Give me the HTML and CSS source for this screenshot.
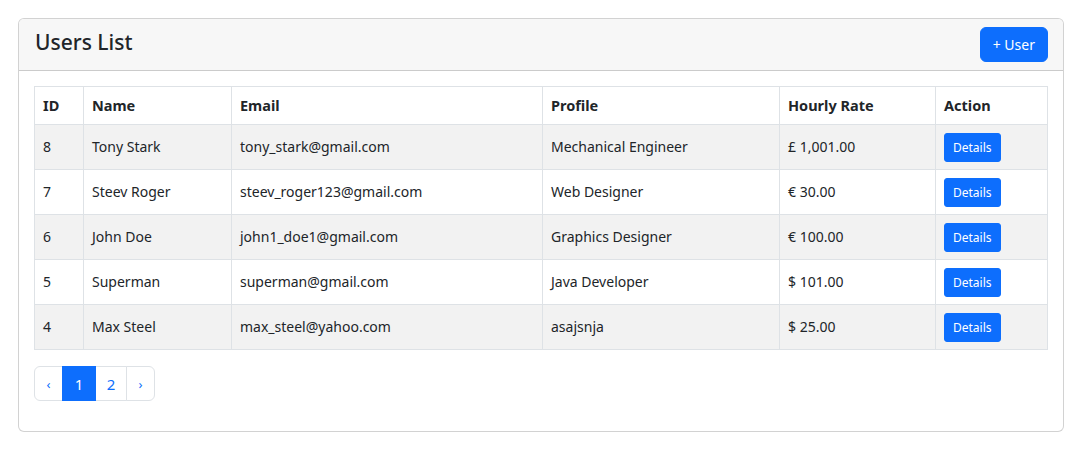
FILE: index.html
```html
<!DOCTYPE html>
<html lang="en">
<head>
<meta charset="utf-8">
<title>Users List</title>
<link rel="stylesheet" href="styles.css">
</head>
<body>
<div class="page">
  <div class="card">
    <div class="card-header">
      <h4 class="title">Users List</h4>
      <button class="btn btn-primary">+ User</button>
    </div>
    <div class="card-body">
      <table class="table">
        <colgroup>
          <col style="width:49px">
          <col style="width:148px">
          <col style="width:311px">
          <col style="width:237px">
          <col style="width:156px">
          <col style="width:112px">
        </colgroup>
        <thead>
          <tr><th>ID</th><th>Name</th><th>Email</th><th>Profile</th><th>Hourly Rate</th><th>Action</th></tr>
        </thead>
        <tbody>
          <tr><td>8</td><td>Tony Stark</td><td>tony_stark@gmail.com</td><td>Mechanical Engineer</td><td>£ 1,001.00</td><td class="act"><button class="btn btn-sm">Details</button></td></tr>
          <tr><td>7</td><td>Steev Roger</td><td>steev_roger123@gmail.com</td><td>Web Designer</td><td>€ 30.00</td><td class="act"><button class="btn btn-sm">Details</button></td></tr>
          <tr><td>6</td><td>John Doe</td><td>john1_doe1@gmail.com</td><td>Graphics Designer</td><td>€ 100.00</td><td class="act"><button class="btn btn-sm">Details</button></td></tr>
          <tr><td>5</td><td>Superman</td><td>superman@gmail.com</td><td>Java Developer</td><td>$ 101.00</td><td class="act"><button class="btn btn-sm">Details</button></td></tr>
          <tr><td>4</td><td>Max Steel</td><td>max_steel@yahoo.com</td><td>asajsnja</td><td>$ 25.00</td><td class="act"><button class="btn btn-sm">Details</button></td></tr>
        </tbody>
      </table>
      <ul class="pagination">
        <li class="page-item prev"><a href="#">‹</a></li>
        <li class="page-item active"><a href="#">1</a></li>
        <li class="page-item num"><a href="#">2</a></li>
        <li class="page-item next"><a href="#">›</a></li>
      </ul>
    </div>
  </div>
</div>
</body>
</html>
```
FILE: styles.css
```css
* { box-sizing: border-box; }
body {
  margin: 0;
  font-family: "Noto Sans", "Open Sans", sans-serif;
  font-size: 14px;
  color: #212529;
  background: #fff;
}
.page { padding: 18px 18px 0 18px; }
.card {
  width: 1046px;
  border: 1px solid rgba(0,0,0,0.175);
  border-radius: 6px;
  background: #fff;
}
.card-header {
  display: flex;
  align-items: center;
  justify-content: space-between;
  height: 52px;
  padding: 0 15px 0 16px;
  background: #f7f7f7;
  border-bottom: 1px solid rgba(0,0,0,0.175);
  border-radius: 5px 5px 0 0;
}
.title {
  margin: 0 0 6px 0;
  font-size: 21px;
  font-weight: 500;
}
.btn {
  font-family: inherit;
  border: 1px solid #0d6efd;
  background: #0d6efd;
  color: #fff;
  cursor: pointer;
}
.btn-primary {
  height: 35px;
  padding: 0 12px;
  font-size: 14px;
  border-radius: 6px;
}
.btn-sm {
  height: 29px;
  padding: 0 8px;
  font-size: 12px;
  border-radius: 3px;
}
.card-body { padding: 15px 15px 15px 15px; }
.table {
  width: 1013px;
  border-collapse: collapse;
  table-layout: fixed;
}
.table th, .table td {
  border: 1px solid #dee2e6;
  padding: 0 8px 2px 8px;
  text-align: left;
  vertical-align: middle;
}
.table th { height: 38px; font-weight: 700; font-size: 14.5px; }
.table td { height: 45px; }
.table td.act { padding-bottom: 0; }
.table tbody tr:nth-child(odd) td { background: #f2f2f2; }
.pagination {
  display: flex;
  list-style: none;
  margin: 16px 0 15px 0;
  padding: 0;
}
.page-item a {
  display: flex;
  align-items: center;
  justify-content: center;
  height: 35px;
  text-decoration: none;
  color: #0d6efd;
  border: 1px solid #dee2e6;
  font-size: 15px;
  background: #fff;
}
.page-item + .page-item a { margin-left: -1px; }
.prev a { width: 29px; border-radius: 6px 0 0 6px; font-size: 13px; }
.active a { width: 34px; background: #0d6efd; border-color: #0d6efd; color: #fff; position: relative; z-index: 1; }
.num a { width: 32px; }
.next a { width: 29px; border-radius: 0 6px 6px 0; font-size: 13px; }
```
